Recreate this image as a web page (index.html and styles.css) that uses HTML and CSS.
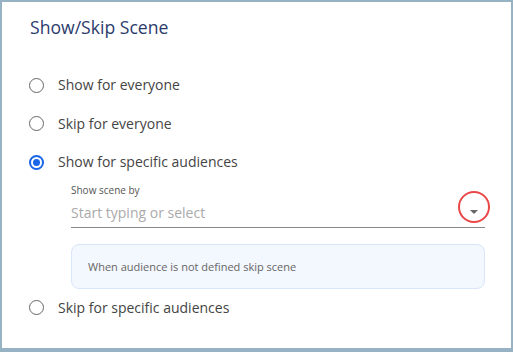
FILE: index.html
```html
<!DOCTYPE html>
<html>
<head>
<meta charset="utf-8">
<link rel="stylesheet" href="styles.css">
</head>
<body>
<div class="card">
  <h1 class="title">Show/Skip Scene</h1>
  <div class="options">
    <label class="option"><span class="radio"></span><span class="label">Show for everyone</span></label>
    <label class="option"><span class="radio"></span><span class="label">Skip for everyone</span></label>
    <label class="option"><span class="radio checked"></span><span class="label">Show for specific audiences</span></label>
    <div class="sub">
      <div class="field-label">Show scene by</div>
      <div class="field">
        <span class="placeholder">Start typing or select</span>
        <span class="caret-wrap">
          <svg class="caret" width="10" height="6" viewBox="0 0 10 6"><path d="M1 1h8L5 5z" fill="#666"/></svg>
          <span class="highlight"></span>
        </span>
      </div>
      <div class="info">When audience is not defined skip scene</div>
    </div>
    <label class="option"><span class="radio"></span><span class="label">Skip for specific audiences</span></label>
  </div>
</div>
</body>
</html>
```
FILE: styles.css
```css
* { box-sizing: border-box; }
html, body { margin: 0; padding: 0; background: #fff; }
body { font-family: "Open Sans", "Noto Sans", sans-serif; }
.card {
  width: 513px;
  height: 352px;
  border: 2px solid #97b3c3;
  border-bottom-width: 4px;
  padding: 13px 26px 0 27px;
  background: #fff;
}
.title {
  margin: 0;
  font-size: 17.6px;
  line-height: 24px;
  font-weight: 400;
  color: #2b3b6b;
  padding-left: 1px;
}
.options {
  margin-top: 27px;
  display: flex;
  flex-direction: column;
}
.option {
  display: flex;
  align-items: center;
  height: 38.5px;
  gap: 14px;
}
.radio {
  width: 15px;
  height: 15px;
  border-radius: 50%;
  border: 1.8px solid #666;
  flex: none;
  display: flex;
  align-items: center;
  justify-content: center;
}
.radio.checked { border-color: #1a66e8; border-width: 2px; }
.radio.checked::after {
  content: "";
  width: 7px;
  height: 7px;
  border-radius: 50%;
  background: #1a66e8;
}
.label {
  font-size: 14px;
  color: #444;
  line-height: 20px;
}
.sub {
  margin-left: 42px;
  width: 414px;
  padding-top: 1px;
}
.field-label {
  font-size: 10px;
  line-height: 14px;
  color: #555;
}
.field {
  display: flex;
  align-items: center;
  justify-content: space-between;
  padding: 6px 0 4px;
  border-bottom: 1px solid #888;
}
.placeholder {
  font-size: 14px;
  line-height: 20px;
  color: #aaa;
}
.caret-wrap {
  position: relative;
  width: 20px;
  height: 20px;
  margin-right: 1px;
  display: flex;
  align-items: center;
  justify-content: center;
}
.caret { display: block; margin-top: -2px; }
.highlight {
  position: absolute;
  left: -6px;
  top: -12px;
  width: 32px;
  height: 32px;
  border: 2.5px solid #ea4848;
  border-radius: 50%;
}
.info {
  margin-top: 16px;
  height: 45px;
  border: 1px solid #d9e5f8;
  background: #f3f7fe;
  border-radius: 8px;
  padding: 0 16px;
  display: flex;
  align-items: center;
  font-size: 11px;
  color: #666;
}
```
